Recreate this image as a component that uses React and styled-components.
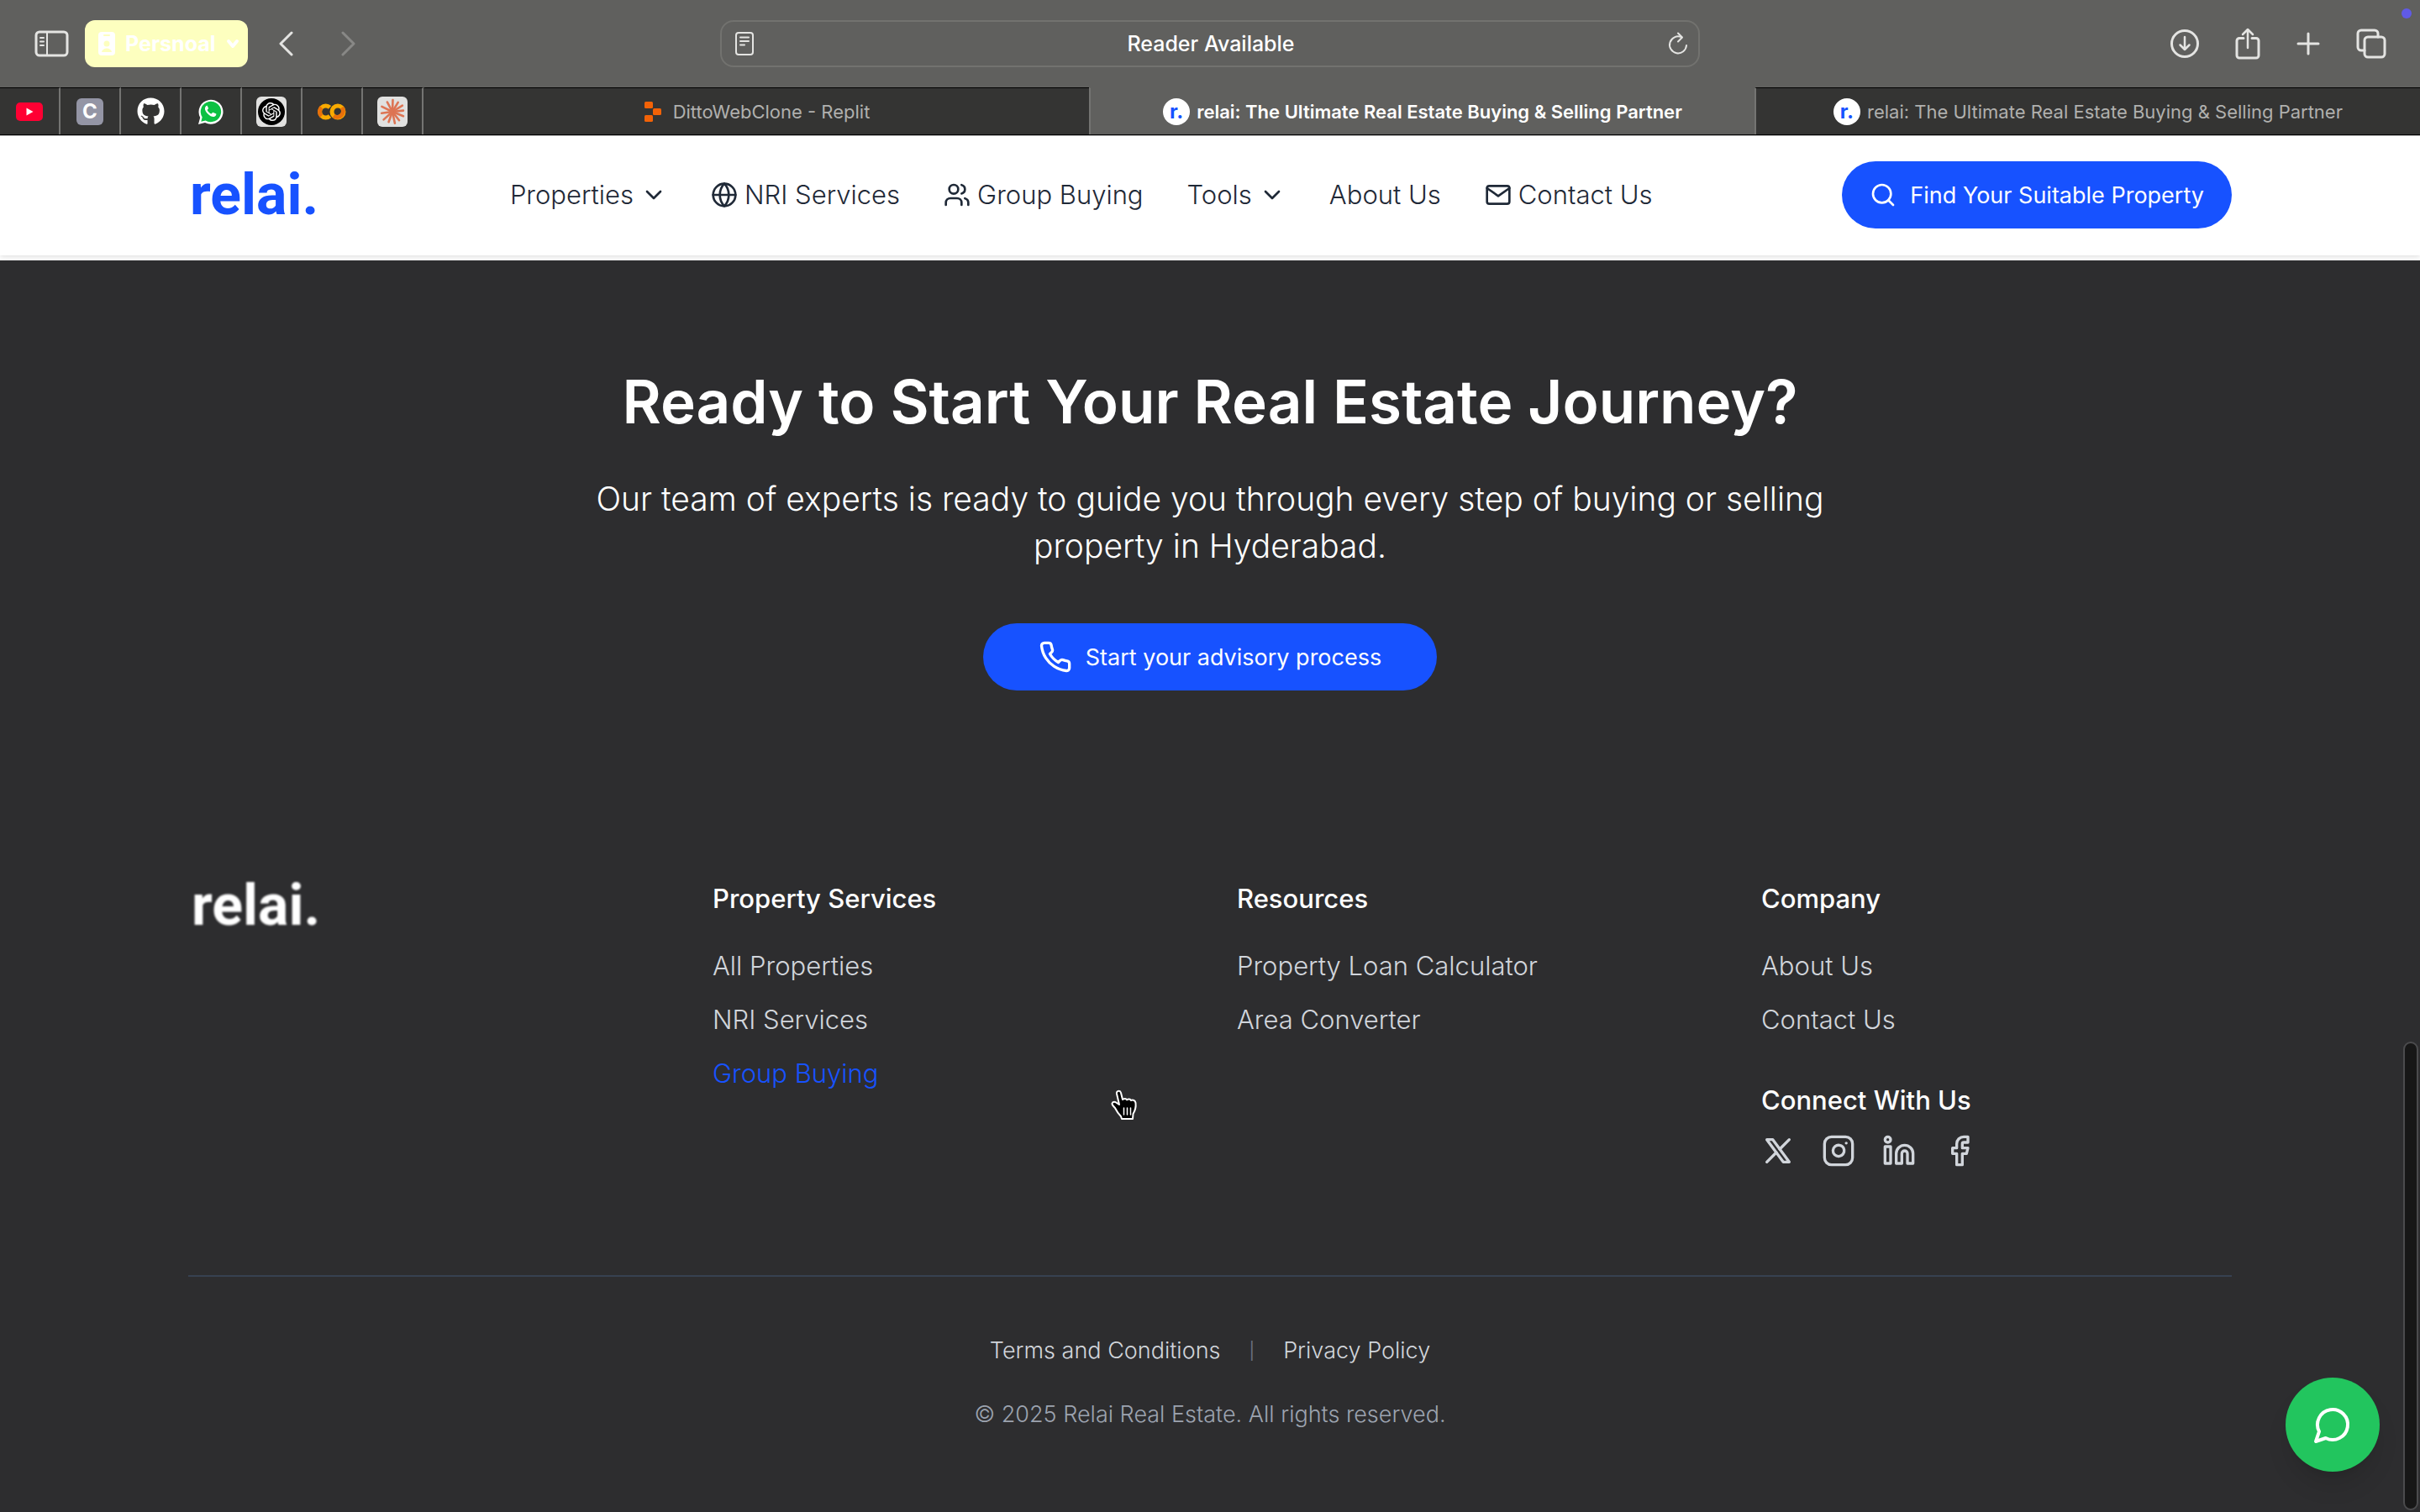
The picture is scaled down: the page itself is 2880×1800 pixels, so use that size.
import React from "react";
import styled, { createGlobalStyle } from "styled-components";
import { ChevronDown, Globe, Users, Search, Instagram, Linkedin, Facebook } from "lucide-react";
import { SiOpenai } from "react-icons/si";
import { FaGithub } from "react-icons/fa";

const color = {
  brand: "#1752ff",
  dark: "#2d2d2f",
  toolbar: "#60605e",
  tab: "#343433",
  navText: "#1f2937",
  link: "#d1d5db",
  muted: "#9ca3af",
  line: "#374151",
};

const GlobalStyle = createGlobalStyle`
  * { box-sizing: border-box; }
  body {
    margin: 0;
    background: #fff;
    font-family: Inter, "Liberation Sans", sans-serif;
    -webkit-font-smoothing: antialiased;
  }
  h1, h2, p, ul { margin: 0; padding: 0; }
  ul { list-style: none; }
  a { color: inherit; text-decoration: none; }
  button { font: inherit; color: inherit; border: 0; background: none; padding: 0; cursor: pointer; }
  svg { display: block; flex: none; }
`;

const Page = styled.div`
  position: relative;
  display: flex;
  flex-direction: column;
  min-height: 100vh;
`;

/* ---------- browser chrome ---------- */

const Toolbar = styled.div`
  position: relative;
  display: grid;
  grid-template-columns: 1fr minmax(0, 1166px) 1fr;
  align-items: center;
  height: 104px;
  padding: 0 40px;
  background: ${color.toolbar};
  color: #e4e4e2;
`;

const ToolGroup = styled.div`
  display: flex;
  align-items: center;
  justify-content: ${(p) => (p.$end ? "flex-end" : "flex-start")};
  gap: ${(p) => p.$gap}px;
`;

const ToolButton = styled.button`
  display: flex;
  opacity: ${(p) => (p.disabled ? 0.3 : 1)};
`;

const ProfileButton = styled.button`
  display: flex;
  align-items: center;
  gap: 12px;
  height: 56px;
  padding: 0 10px 0 16px;
  border-radius: 12px;
  background: #fdffbf;
  color: #fff;
  font-size: 25px;
  font-weight: 700;
`;

const AddressBar = styled.div`
  display: flex;
  align-items: center;
  height: 56px;
  padding: 0 12px 0 16px;
  border: 2px solid #72726f;
  border-radius: 16px;
`;

const AddressInput = styled.input`
  flex: 1;
  min-width: 0;
  border: 0;
  outline: 0;
  background: none;
  color: #fff;
  text-align: center;
  font: 500 25px/32px Inter, "Liberation Sans", sans-serif;
`;

const StatusDot = styled.span`
  position: absolute;
  top: 10px;
  right: 10px;
  width: 12px;
  height: 12px;
  border-radius: 50%;
  background: #605ae6;
`;

const TabStrip = styled.div`
  display: flex;
  height: 57px;
  border-bottom: 1px solid #000;
  background: ${color.tab};
`;

const PinnedTab = styled.button`
  display: flex;
  align-items: center;
  justify-content: center;
  width: 72px;
  border-top: 1px solid #000;
  border-right: 2px solid #747472;
`;

const Tab = styled.button`
  display: flex;
  flex: 1;
  align-items: center;
  justify-content: center;
  gap: ${(p) => (p.$wide ? 14 : 8)}px;
  border-top: 1px solid ${(p) => (p.$active ? color.toolbar : "#000")};
  border-left: 2px solid ${(p) => (p.$first ? color.tab : "#747472")};
  background: ${(p) => (p.$active ? color.toolbar : color.tab)};
  color: ${(p) => (p.$active ? "#fff" : "#b0b0ae")};
  font-size: 22px;
  font-weight: ${(p) => (p.$active ? 600 : 400)};
`;

const FaviconTile = styled.span`
  display: flex;
  align-items: center;
  justify-content: center;
  width: ${(p) => p.$size}px;
  height: ${(p) => p.$size}px;
  border-radius: ${(p) => (p.$round ? "50%" : "6px")};
  background: ${(p) => p.$bg};
  color: ${(p) => p.$fg || "#fff"};
  font-size: 24px;
  line-height: 1;
  font-weight: 700;
`;

/* ---------- site header ---------- */

const Container = styled.div`
  width: 100%;
  max-width: 2560px;
  margin: 0 auto;
  padding: 0 64px;
`;

const Header = styled.header`
  margin-bottom: 6px;
  padding: 30px 160px 32px;
  border-top: 1px solid #b8b8b8;
  background: #fff;
  box-shadow: 0 2px 6px rgba(0, 0, 0, 0.12);
`;

const HeaderRow = styled(Container)`
  display: flex;
  align-items: center;
  justify-content: space-between;
`;

const Logo = styled.a`
  display: inline-block;
  padding: 0 ${(p) => (p.$light ? 4 : 2)}px;
  color: ${(p) => (p.$light ? "#fff" : color.brand)};
  font: 700 68px/80px Roboto, "Liberation Sans", sans-serif;
  line-height: ${(p) => (p.$light ? 64 : 80)}px;
  filter: ${(p) => (p.$light ? "blur(1px)" : "none")};
`;

const Nav = styled.nav`
  display: flex;
  align-items: center;
  gap: 52px;
  color: ${color.navText};
  font-size: 31px;
  line-height: 48px;
  font-weight: 300;
`;

const NavItem = styled.a`
  display: flex;
  align-items: center;
  gap: 8px;
  font-weight: 300;
`;

const PillButton = styled.button`
  display: flex;
  align-items: center;
  gap: 16px;
  height: 80px;
  padding: 0 ${(p) => (p.$large ? 66 : 33)}px;
  border-radius: 40px;
  background: ${color.brand};
  color: #fff;
  font-size: 27px;
  font-weight: 400;
`;

/* ---------- call to action ---------- */

const Hero = styled.section`
  position: relative;
  display: flex;
  flex-direction: column;
  align-items: center;
  padding: 128px 64px;
  background: ${color.dark};
  color: #fff;
  text-align: center;
`;

const HeroTitle = styled.h1`
  margin-bottom: 48px;
  font-size: 71px;
  line-height: 80px;
  font-weight: 600;
`;

const HeroText = styled.p`
  max-width: 1536px;
  margin-bottom: 64px;
  font-size: 39px;
  line-height: 56px;
  font-weight: 300;
`;

/* ---------- footer ---------- */

const Footer = styled.footer`
  flex: 1;
  padding: 96px 160px;
  background: ${color.dark};
  color: #fff;
`;

const FooterGrid = styled.div`
  display: grid;
  grid-template-columns: repeat(4, 1fr);
  gap: 64px;
`;

const FooterTitle = styled.h2`
  font-size: 31px;
  line-height: 48px;
  font-weight: 500;
`;

const LinkList = styled.ul`
  display: flex;
  flex-direction: column;
  gap: 16px;
  margin: 32px 0 48px;
  font-size: 31px;
  line-height: 48px;
  font-weight: 300;
`;

const FooterLink = styled.a`
  color: ${(p) => (p.$hovered ? color.brand : color.link)};
`;

const SocialRow = styled.div`
  display: flex;
  gap: 32px;
  margin-top: 16px;
  color: ${color.link};
`;

const Legal = styled.div`
  display: flex;
  flex-direction: column;
  align-items: center;
  gap: 32px;
  margin-top: 128px;
  padding-top: 64px;
  border-top: 2px solid ${color.line};
  font-size: 27px;
  font-weight: 300;
`;

const LegalLinks = styled.div`
  display: flex;
  gap: 34px;
  color: ${color.link};
  line-height: 48px;
`;

const Separator = styled.span`
  color: #6b7280;
  font-size: 20px;
  font-weight: 400;
`;

const Copyright = styled.p`
  color: ${color.muted};
  line-height: 40px;
`;

/* ---------- overlays ---------- */

const ChatButton = styled.button`
  position: fixed;
  right: 48px;
  bottom: 48px;
  display: flex;
  align-items: center;
  justify-content: center;
  width: 112px;
  height: 112px;
  border-radius: 50%;
  background: #22c55e;
  color: #fff;
  box-shadow: 0 20px 30px -6px rgba(0, 0, 0, 0.12), 0 8px 12px -8px rgba(0, 0, 0, 0.12);
`;

const ScrollThumb = styled.div`
  position: fixed;
  right: 2px;
  bottom: 2px;
  width: 18px;
  height: 31%;
  border: 2px solid #4b4b4d;
  border-radius: 9px;
  background: #171717;
`;

const Pointer = styled.svg`
  position: absolute;
  top: 1297px;
  left: 1321px;
`;

/* ---------- icons ---------- */

const Stroke = ({ w, h, sw = 3, children }) => (
  <svg width={w} height={h} viewBox={`0 0 ${w} ${h}`} fill="none" stroke="currentColor" strokeWidth={sw} strokeLinecap="round" strokeLinejoin="round" aria-hidden="true">
    {children}
  </svg>
);

const Line24 = ({ size, children }) => (
  <svg width={size} height={size} viewBox="0 0 24 24" fill="none" stroke="currentColor" strokeWidth="2" strokeLinecap="round" strokeLinejoin="round" aria-hidden="true">
    {children}
  </svg>
);

const SidebarIcon = () => (
  <Stroke w={42} h={32}>
    <rect x="3" y="2" width="37" height="28" rx="4" />
    <path d="M16 2v28" strokeWidth="2" />
    <path d="M8 9h4M8 13.500h4M8 18h4" strokeWidth="2" />
  </Stroke>
);

const BadgeIcon = () => (
  <svg width="20" height="28" viewBox="0 0 20 28" aria-hidden="true">
    <rect width="20" height="28" rx="4" fill="#fff" />
    <rect x="6" y="3" width="8" height="2" rx="1" fill="#fdffbf" />
    <circle cx="10" cy="14" r="3.500" fill="#fdffbf" />
    <path d="M4 24c1-6 11-6 12 0z" fill="#fdffbf" />
  </svg>
);

const ReaderIcon = () => (
  <Stroke w={22} h={28} sw={2}>
    <rect x="1" y="1" width="20" height="26" rx="3" />
    <path d="M6 6.500h10M6 11h10M6 15.500h5" />
  </Stroke>
);

const ReloadIcon = () => (
  <Stroke w={24} h={28} sw={2}>
    <path d="M16 6.200A10 10 0 1 0 22 16" />
    <path d="M12 1.500l5 5-5 5" />
  </Stroke>
);

const MailIcon = () => (
  <Line24 size={32}>
    <rect x="2" y="4" width="20" height="16" rx="2" />
    <path d="M22 6l-10 7L2 6" />
  </Line24>
);

const PhoneIcon = () => (
  <Line24 size={40}>
    <path d="M22 16.920v3a2 2 0 0 1-2.180 2 19.790 19.790 0 0 1-8.630-3.070 19.500 19.500 0 0 1-6-6 19.790 19.790 0 0 1-3.070-8.670A2 2 0 0 1 4.110 2h3a2 2 0 0 1 2 1.720 12.840 12.840 0 0 0 .700 2.810 2 2 0 0 1-.450 2.110L8.090 9.910a16 16 0 0 0 6 6l1.270-1.270a2 2 0 0 1 2.110-.450 12.840 12.840 0 0 0 2.810.700A2 2 0 0 1 22 16.920z" />
  </Line24>
);

const XIcon = () => (
  <Line24 size={40}>
    <path d="M4 4l11.733 16h4.267l-11.733 -16z" />
    <path d="M4 20l6.768 -6.768m2.460 -2.460l6.772 -6.772" />
  </Line24>
);

const ChatIcon = () => (
  <Line24 size={48}>
    <path d="M7.900 20A9 9 0 1 0 4 16.100L2 22Z" />
  </Line24>
);

const YoutubeFavicon = () => (
  <svg width="32" height="22" viewBox="0 0 32 22" aria-hidden="true">
    <rect width="32" height="22" rx="5" fill="#ff0033" />
    <path d="M12.500 6.500v9l8-4.500z" fill="#fff" />
  </svg>
);

const WhatsappFavicon = () => (
  <svg width="32" height="32" viewBox="0 0 32 32" aria-hidden="true">
    <path d="M1 31l2.200-8A14.500 14.500 0 1 1 9 28.900z" fill="#fff" />
    <path d="M4.300 27.800l1.400-5.200A12.200 12.200 0 1 1 9.600 26.400z" fill="#0dc143" />
    <path d="M11.600 8.800c-.600-.100-1.200.100-1.600.600-2.200 2.400-.900 5.800 2.300 9 3.300 3.300 7 4.700 9.200 2.600.700-.700 1-1.700.800-2.400l-3.500-1.700c-.500-.200-.800 0-1.100.400l-1 1.300c-2.300-.900-4-2.500-5.100-4.700l1.200-1.400c.200-.300.200-.600.100-.900z" fill="#fff" />
  </svg>
);

const ColabFavicon = () => (
  <svg width="34" height="20" viewBox="0 0 34 20" fill="none" strokeWidth="5" aria-hidden="true">
    <path d="M14.500 4.900A7 7 0 1 0 14.500 15.100" stroke="#f9ab00" />
    <path d="M4.600 15.100A7 7 0 0 1 4.600 4.900" stroke="#e8710a" />
    <circle cx="24" cy="10" r="7" stroke="#f9ab00" />
    <path d="M28.900 5.100A7 7 0 0 1 19.100 14.900" stroke="#e8710a" />
  </svg>
);

const RAYS = [2, 31, 58, 84, 112, 142, 168, 200, 228, 262, 296, 332];

const ClaudeFavicon = () => (
  <svg width="32" height="32" viewBox="-16 -16 32 32" stroke="#dd7554" strokeWidth="2.600" strokeLinecap="round" aria-hidden="true">
    {RAYS.map((a, i) => (
      <path key={a} d={`M0 0V-${i % 2 ? 13 : 14}`} transform={`rotate(${a})`} />
    ))}
  </svg>
);

const ReplitFavicon = () => (
  <svg width="20" height="24" viewBox="0 0 20 24" fill="#f26207" aria-hidden="true">
    <rect x="0" y="0" width="10" height="8" rx="1.500" />
    <rect x="10" y="8" width="10" height="8" rx="1.500" />
    <rect x="0" y="16" width="10" height="8" rx="1.500" />
  </svg>
);

const RelaiFavicon = () => (
  <FaviconTile $size={32} $bg="#fff" $fg={color.brand} $round>r.</FaviconTile>
);

/* ---------- data ---------- */

const pinned = [
  ["YouTube", <YoutubeFavicon />],
  ["C", <FaviconTile $size={32} $bg="#9495a5">C</FaviconTile>],
  ["GitHub", <FaGithub size={33} color="#fff" />],
  ["WhatsApp", <WhatsappFavicon />],
  [
    "ChatGPT",
    <FaviconTile $size={36} $bg="#e1e1e0">
      <FaviconTile $size={32} $bg="#000" $round><SiOpenai size={22} /></FaviconTile>
    </FaviconTile>,
  ],
  ["Colab", <ColabFavicon />],
  ["Claude", <FaviconTile $size={36} $bg="#e1e1e0"><ClaudeFavicon /></FaviconTile>],
];

const pageTitle = "relai: The Ultimate Real Estate Buying & Selling Partner";

const FooterLinks = ({ items }) => (
  <LinkList>
    {items.map((label) => (
      <li key={label}>
        <FooterLink href="#" $hovered={label === "Group Buying"}>{label}</FooterLink>
      </li>
    ))}
  </LinkList>
);

export default function App() {
  return (
    <Page>
      <GlobalStyle />
      <Toolbar>
        <ToolGroup $gap={19}>
          <ToolButton aria-label="Sidebar"><SidebarIcon /></ToolButton>
          <ProfileButton>
            <BadgeIcon />
            Persnoal
            <Stroke w={16} h={12} sw={4}><path d="M3 3l5 6 5-6" /></Stroke>
          </ProfileButton>
          <ToolGroup $gap={56}>
            <ToolButton aria-label="Back">
              <Stroke w={36} h={30}><path d="M33 2L20 15l13 13" /></Stroke>
            </ToolButton>
            <ToolButton aria-label="Forward" disabled>
              <Stroke w={18} h={30}><path d="M2 2l13 13L2 28" /></Stroke>
            </ToolButton>
          </ToolGroup>
        </ToolGroup>
        <AddressBar>
          <ToolButton aria-label="Reader"><ReaderIcon /></ToolButton>
          <AddressInput aria-label="Address" value="Reader Available" readOnly />
          <ToolButton aria-label="Reload"><ReloadIcon /></ToolButton>
        </AddressBar>
        <ToolGroup $gap={43} $end>
          <ToolButton aria-label="Downloads">
            <Stroke w={34} h={34}>
              <circle cx="17" cy="17" r="15.500" />
              <path d="M17 9v15M11.500 18.500L17 24l5.500-5.500" strokeWidth="2.500" />
            </Stroke>
          </ToolButton>
          <ToolButton aria-label="Share">
            <Stroke w={30} h={38}>
              <path d="M10 12.500H5a3 3 0 0 0-3 3V33a3 3 0 0 0 3 3h20a3 3 0 0 0 3-3V15.500a3 3 0 0 0-3-3h-5" />
              <path d="M15 24V2.500M9 8l6-6 6 6" strokeWidth="2.500" />
            </Stroke>
          </ToolButton>
          <ToolButton aria-label="New tab">
            <Stroke w={28} h={28}><path d="M14 2v24M2 14h24" /></Stroke>
          </ToolButton>
          <ToolButton aria-label="Tab overview">
            <Stroke w={36} h={36}>
              <rect x="10" y="10" width="24" height="24" rx="4" />
              <path d="M10 26H6a4 4 0 0 1-4-4V6a4 4 0 0 1 4-4h16a4 4 0 0 1 4 4v4" />
            </Stroke>
          </ToolButton>
        </ToolGroup>
        <StatusDot />
      </Toolbar>
      <TabStrip>
        {pinned.map(([name, icon]) => (
          <PinnedTab key={name} aria-label={name}>{icon}</PinnedTab>
        ))}
        <Tab $first $wide><ReplitFavicon />DittoWebClone - Replit</Tab>
        <Tab $active><RelaiFavicon />{pageTitle}</Tab>
        <Tab><RelaiFavicon />{pageTitle}</Tab>
      </TabStrip>

      <Header>
        <HeaderRow>
          <Logo href="#">relai.</Logo>
          <Nav>
            <NavItem as="button">Properties<ChevronDown size={32} /></NavItem>
            <NavItem href="#"><Globe size={32} />NRI Services</NavItem>
            <NavItem href="#"><Users size={32} />Group Buying</NavItem>
            <NavItem as="button">Tools<ChevronDown size={32} /></NavItem>
            <NavItem href="#">About Us</NavItem>
            <NavItem href="#"><MailIcon />Contact Us</NavItem>
          </Nav>
          <PillButton><Search size={32} />Find Your Suitable Property</PillButton>
        </HeaderRow>
      </Header>

      <Hero>
        <HeroTitle>Ready to Start Your Real Estate Journey?</HeroTitle>
        <HeroText>
          Our team of experts is ready to guide you through every step of buying or selling property in Hyderabad.
        </HeroText>
        <PillButton $large><PhoneIcon />Start your advisory process</PillButton>
      </Hero>

      <Footer>
        <Container>
          <FooterGrid>
            <div><Logo href="#" $light>relai.</Logo></div>
            <div>
              <FooterTitle>Property Services</FooterTitle>
              <FooterLinks items={["All Properties", "NRI Services", "Group Buying"]} />
            </div>
            <div>
              <FooterTitle>Resources</FooterTitle>
              <FooterLinks items={["Property Loan Calculator", "Area Converter"]} />
            </div>
            <div>
              <FooterTitle>Company</FooterTitle>
              <FooterLinks items={["About Us", "Contact Us"]} />
              <FooterTitle>Connect With Us</FooterTitle>
              <SocialRow>
                <a href="#" aria-label="X"><XIcon /></a>
                <a href="#" aria-label="Instagram"><Instagram size={40} /></a>
                <a href="#" aria-label="LinkedIn"><Linkedin size={40} /></a>
                <a href="#" aria-label="Facebook"><Facebook size={40} /></a>
              </SocialRow>
            </div>
          </FooterGrid>
          <Legal>
            <LegalLinks>
              <a href="#">Terms and Conditions</a>
              <Separator>|</Separator>
              <a href="#">Privacy Policy</a>
            </LegalLinks>
            <Copyright>© 2025 Relai Real Estate. All rights reserved.</Copyright>
          </Legal>
        </Container>
      </Footer>

      <ScrollThumb />
      <ChatButton aria-label="Chat"><ChatIcon /></ChatButton>
      <Pointer width="36" height="38" viewBox="0 0 36 38" aria-hidden="true">
        <path d="M11 18L8 5c-.700-3.500 4-4.500 5-1l2 8c2-1.500 4-1.300 5 .300 2-1.300 4-1 5 .700 2.500-1 5 0 5.500 3 .600 5-.500 9-3 13l-.500 6H14l-1-3c-3-3-5-6-7-10-2-2-4-4-3.500-5.500 1-2.500 4-2 5.500-.500z" fill="#000" stroke="#fff" strokeWidth="2" strokeLinejoin="round" />
        <path d="M16.500 22v8M20.500 22v8M24.500 22v8" stroke="#fff" strokeWidth="1.500" strokeLinecap="round" />
      </Pointer>
    </Page>
  );
}
